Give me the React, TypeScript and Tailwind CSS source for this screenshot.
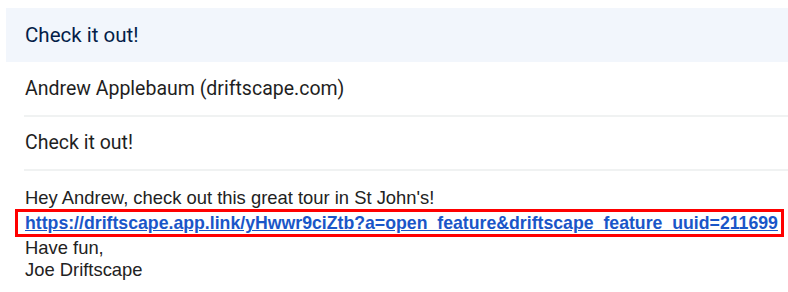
export default function App() {
  return (
    <div className="w-[788px] h-[292px] bg-white pt-[8px] pl-[6px] overflow-hidden">
      <div className="h-[54px] bg-[#f2f6fc] flex items-center pl-[19px] pt-[1px]">
        <span className="text-[20.5px] text-[#041e49]" style={{ fontFamily: "Roboto, 'Noto Sans', sans-serif" }}>
          Check it out!
        </span>
      </div>
      <div className="ml-[18px]" style={{ fontFamily: "Roboto, 'Noto Sans', sans-serif" }}>
        <div className="h-[55px] flex items-center pl-[1px] border-b-2 border-[#f0f2f2]">
          <span className="text-[19.5px] text-[#1f1f1f]">Andrew Applebaum (driftscape.com)</span>
        </div>
        <div className="h-[54px] flex items-center pl-[1px] border-b-2 border-[#f0f2f2]">
          <span className="text-[19.5px] text-[#1f1f1f]">Check it out!</span>
        </div>
      </div>
      <div
        className="pl-[19px] pt-[16px] text-[18.4px] leading-[22px] text-[#222222]"
        style={{ fontFamily: "'Liberation Sans', Arial, sans-serif" }}
      >
        <div>Hey Andrew, check out this great tour in St John's!</div>
        <div className="ml-[-10px] w-[769px] border-[3px] border-[#ff0000] pl-[7px] leading-[22px]">
          <a href="#" className="font-bold text-[#1a56c8] underline text-[17.7px]">
            https://driftscape.app.link/yHwwr9ciZtb?a=open_feature&amp;driftscape_feature_uuid=211699
          </a>
        </div>
        <div>Have fun,</div>
        <div>Joe Driftscape</div>
      </div>
    </div>
  );
}
